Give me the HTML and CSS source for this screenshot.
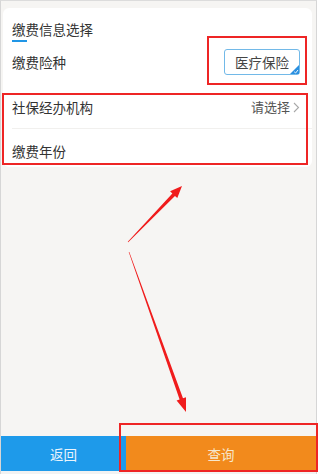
FILE: index.html
```html
<!DOCTYPE html>
<html lang="zh-CN">
<head>
<meta charset="utf-8">
<title>缴费信息选择</title>
<link rel="stylesheet" href="styles.css">
</head>
<body>
<div class="screen">
  <div class="card">
    <div class="title">缴费信息选择</div>
    <div class="title-bar"></div>
    <div class="row row-type">
      <span class="label">缴费险种</span>
      <span class="chip">医疗保险
        <svg class="chip-corner" width="9" height="9" viewBox="0 0 9 9"><path d="M9 0 L9 9 L0 9 Z" fill="#2a8fe0"/><path d="M4.2 6.8 L5.6 8 L8 5" stroke="#fff" stroke-width="0.9" fill="none"/></svg>
      </span>
    </div>
    <div class="row row-org">
      <span class="label">社保经办机构</span>
      <span class="value">请选择<svg class="chev" width="7" height="11" viewBox="0 0 7 11"><path d="M1 1 L5.5 5.5 L1 10" stroke="#a8a8a8" stroke-width="1.1" fill="none"/></svg></span>
    </div>
    <div class="divider"></div>
    <div class="row row-year">
      <span class="label">缴费年份</span>
    </div>
  </div>
  <div class="spacer"></div>
  <div class="actions">
    <div class="btn btn-back">返回</div>
    <div class="btn btn-query">查询</div>
  </div>
  <div class="foot"></div>

  <div class="mark mark-1"></div>
  <div class="mark mark-2"></div>
  <div class="mark mark-3"></div>
  <svg class="arrows" width="320" height="474" viewBox="0 0 320 474">
    <polygon fill="#f01c1c" points="128.22,242.21 174.97,195.89 177.27,198.11 182,186 170.07,191.17 172.37,193.39 127.78,241.79"/>
    <polygon fill="#f01c1c" points="129.28,251.90 182.99,398.21 186.01,397.13 186,412 176.59,400.49 179.60,399.41 128.72,252.10"/>
  </svg>
</div>
</body>
</html>
```

FILE: styles.css
```css
* { box-sizing: border-box; }
html, body { margin: 0; padding: 0; background: #ffffff; }
body {
  width: 320px;
  height: 474px;
  overflow: hidden;
  font-family: "Noto Sans CJK SC", "Noto Sans", sans-serif;
}
.screen {
  position: relative;
  width: 317px;
  height: 474px;
  background: #f6f5f3;
  border-left: 1px solid #d6d6d6;
  border-right: 1px solid #d6d6d6;
  border-top: 1px solid #dcdcdc;
  display: flex;
  flex-direction: column;
}
.card {
  margin: 7px 4px 0 2px;
  height: 159px;
  background: #ffffff;
  border-radius: 6px;
  padding: 0 12px 0 9px;
}
.title {
  padding-top: 11px;
  font-size: 13.5px;
  line-height: 20px;
  color: #333;
}
.title-bar {
  margin-top: 1px;
  width: 15px;
  height: 2px;
  background: #2196e6;
}
.row {
  display: flex;
  align-items: center;
  justify-content: space-between;
  font-size: 13.5px;
  line-height: 20px;
  color: #333;
}
.row-type { height: 40px; }
.row-org { height: 46px; padding-top: 4px; }
.row-year { height: 38px; align-items: flex-start; padding-top: 12px; }
.divider {
  height: 1px;
  background: #f1f0ee;
  margin: 0 -12px 0 0;
}
.chip {
  position: relative;
  width: 76px;
  height: 26px;
  border: 1px solid #72b9e8;
  border-radius: 3px;
  display: flex;
  align-items: center;
  justify-content: center;
  color: #444;
  font-size: 13.5px;
}
.chip-corner {
  position: absolute;
  right: 0;
  bottom: 0;
}
.value {
  display: flex;
  align-items: center;
  gap: 3px;
  font-size: 13px;
  color: #555;
}
.chev { display: block; }
.spacer { flex: 1; }
.actions {
  height: 35px;
  display: flex;
}
.btn {
  display: flex;
  align-items: center;
  justify-content: center;
  font-size: 13.5px;
}
.btn-back {
  width: 125px;
  background: #1e9aea;
  color: #eaf4fc;
}
.btn-query {
  flex: 1;
  background: #f28a1c;
  color: #f6e7cc;
}
.foot {
  height: 3px;
  background: #f2f2f2;
}
.mark {
  position: absolute;
  border: 2px solid #ee2525;
}
.mark-1 { left: 206px; top: 35px; width: 100px; height: 49px; }
.mark-2 { left: 1px; top: 92px; width: 306px; height: 72px; }
.mark-3 { left: 118px; top: 422px; width: 199px; height: 49px; }
.arrows {
  position: absolute;
  left: -1px;
  top: -1px;
  pointer-events: none;
}
```
